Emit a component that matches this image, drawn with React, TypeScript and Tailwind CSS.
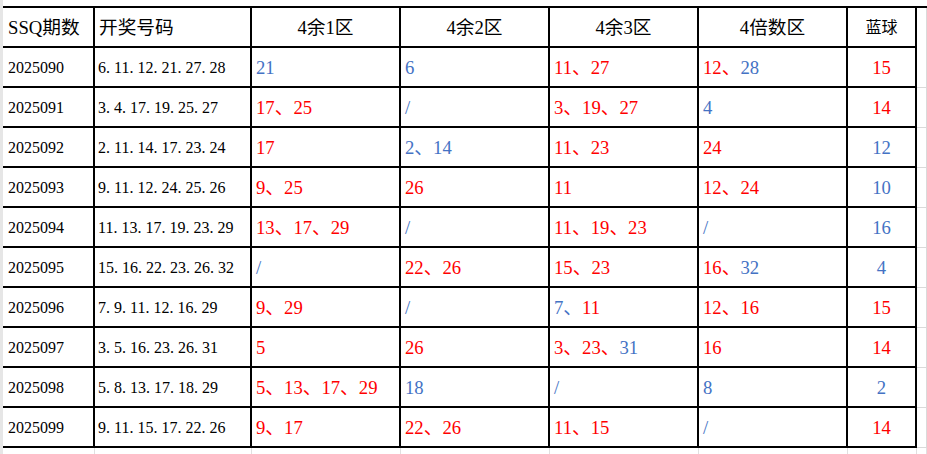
import React from 'react';

type Part = { t: string; c: 'r' | 'b' };

type Row = {
  id: string;
  nums: string;
  z1: Part[];
  z2: Part[];
  z3: Part[];
  z4: Part[];
  blue: Part;
};

const r = (t: string): Part => ({ t, c: 'r' });
const b = (t: string): Part => ({ t, c: 'b' });

const rows: Row[] = [
  { id: '2025090', nums: '6.11.12.21.27.28', z1: [b('21')], z2: [b('6')], z3: [r('11'), r('27')], z4: [r('12'), b('28')], blue: r('15') },
  { id: '2025091', nums: '3.4.17.19.25.27', z1: [r('17'), r('25')], z2: [b('/')], z3: [r('3'), r('19'), r('27')], z4: [b('4')], blue: r('14') },
  { id: '2025092', nums: '2.11.14.17.23.24', z1: [r('17')], z2: [b('2'), b('14')], z3: [r('11'), r('23')], z4: [r('24')], blue: b('12') },
  { id: '2025093', nums: '9.11.12.24.25.26', z1: [r('9'), r('25')], z2: [r('26')], z3: [r('11')], z4: [r('12'), r('24')], blue: b('10') },
  { id: '2025094', nums: '11.13.17.19.23.29', z1: [r('13'), r('17'), r('29')], z2: [b('/')], z3: [r('11'), r('19'), r('23')], z4: [b('/')], blue: b('16') },
  { id: '2025095', nums: '15.16.22.23.26.32', z1: [b('/')], z2: [r('22'), r('26')], z3: [r('15'), r('23')], z4: [r('16'), b('32')], blue: b('4') },
  { id: '2025096', nums: '7.9.11.12.16.29', z1: [r('9'), r('29')], z2: [b('/')], z3: [b('7'), r('11')], z4: [r('12'), r('16')], blue: r('15') },
  { id: '2025097', nums: '3.5.16.23.26.31', z1: [r('5')], z2: [r('26')], z3: [r('3'), r('23'), b('31')], z4: [r('16')], blue: r('14') },
  { id: '2025098', nums: '5.8.13.17.18.29', z1: [r('5'), r('13'), r('17'), r('29')], z2: [b('18')], z3: [b('/')], z4: [b('8')], blue: b('2') },
  { id: '2025099', nums: '9.11.15.17.22.26', z1: [r('9'), r('17')], z2: [r('22'), r('26')], z3: [r('11'), r('15')], z4: [b('/')], blue: r('14') },
];

const color = (c: 'r' | 'b') => (c === 'r' ? 'text-[#ff0000]' : 'text-[#4472c4]');

const cell = 'border-r-2 border-b-2 border-black flex items-center';

// periods in the draw numbers are half-width, like the sheet's font
const Draw = ({ s }: { s: string }) => (
  <span>
    {s.split('.').map((n, i) => (
      <React.Fragment key={i}>
        {i > 0 && <span className="inline-block w-[8px]">.</span>}
        {n}
      </React.Fragment>
    ))}
  </span>
);

const Zone = ({ parts }: { parts: Part[] }) => (
  <div className={`${cell} pl-1 pt-[3px] text-[18.7px]`}>
    {parts.map((p, i) => (
      <span key={i} className={color(p.c)}>
        {p.t}
        {i < parts.length - 1 && '、'}
      </span>
    ))}
  </div>
);

const App: React.FC = () => {
  return (
    <div className="flex w-[927px] h-[454px] bg-white overflow-hidden font-['Liberation_Serif','Noto_Sans_CJK_SC',serif] text-black">
      <div className="w-[3px] h-full bg-[#e6e6e6]" />
      <div className="flex-1 pt-[6px]">
        <div className="grid grid-cols-[92px_157px_149px_149px_149px_149px_69px_10px] auto-rows-[40px] border-t-2 border-black">
          {/* header */}
          <div className={`${cell} pl-[5px] pt-[2px] text-[18.7px]`}>SSQ期数</div>
          <div className={`${cell} pl-1 pt-[2px] text-[18.7px]`}>开奖号码</div>
          <div className={`${cell} justify-center pt-[2px] text-[18.7px]`}>4余1区</div>
          <div className={`${cell} justify-center pt-[2px] text-[18.7px]`}>4余2区</div>
          <div className={`${cell} justify-center pt-[2px] text-[18.7px]`}>4余3区</div>
          <div className={`${cell} justify-center pt-[2px] text-[18.7px]`}>4倍数区</div>
          <div className={`${cell} justify-center pt-[2px] text-[16px]`}>蓝球</div>
          <div className="border-r border-[#dadada]" />

          {rows.map((row) => (
            <React.Fragment key={row.id}>
              <div className={`${cell} pl-[5px] pt-[2px] text-[16px]`}>{row.id}</div>
              <div className={`${cell} pl-[3px] pt-[2px] text-[16px]`}>
                <Draw s={row.nums} />
              </div>
              <Zone parts={row.z1} />
              <Zone parts={row.z2} />
              <Zone parts={row.z3} />
              <Zone parts={row.z4} />
              <div className={`${cell} justify-center pt-[3px] text-[18.7px] ${color(row.blue.c)}`}>{row.blue.t}</div>
              <div className="border-r border-b border-[#dadada]" />
            </React.Fragment>
          ))}
        </div>
        <div className="grid grid-cols-[92px_157px_149px_149px_149px_149px_69px_10px] h-[10px]">
          {Array.from({ length: 8 }).map((_, i) => (
            <div key={i} className="border-r border-[#e0e0e0]" />
          ))}
        </div>
      </div>
    </div>
  );
};

export default App;
